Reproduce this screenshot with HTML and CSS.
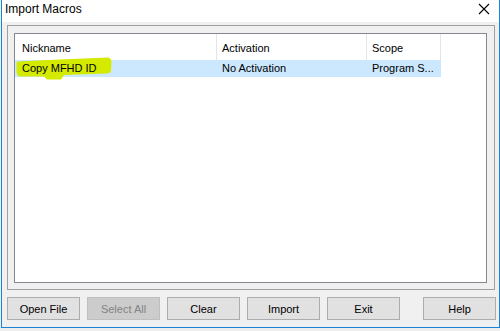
FILE: index.html
```html
<!DOCTYPE html>
<html lang="en">
<head>
  <meta charset="UTF-8"/>
  <title>Import Macros</title>
  <link rel="stylesheet" href="styles.css">
</head>
<body>

  <div class="window">
    <!-- TITLE BAR -->
    <div class="titlebar">
      <div class="title">Import Macros</div>
      <svg class="close" width="12" height="12" viewBox="0 0 12 12">
        <path d="M1 1 L11 11 M11 1 L1 11" stroke="#000" stroke-width="1.1" fill="none"/>
      </svg>
    </div>

    <!-- CLIENT AREA -->
    <div class="client">
      <div class="frame">
        <div class="listbox">
          <div class="list-head">
            <div class="col col-name">Nickname</div>
            <div class="col">Activation</div>
            <div class="col">Scope</div>
          </div>
          <div class="list-row selected">
            <svg class="marker" width="110" height="26" viewBox="14 55 110 26">
              <path d="M17 61.5 L60 59.5 L107 57.5 Q111.5 57.5 111.5 62 L111 71 Q110.5 73.5 106 73.5 L64 75 L61 79.5 L47 79.5 L44 76.5 L20 76.5 Q16.5 76 16.5 71 L16.5 65 Q16.5 62 17 61.5 Z" fill="#d4ea00"/>
            </svg>
            <div class="col col-name">Copy MFHD ID</div>
            <div class="col">No Activation</div>
            <div class="col">Program S...</div>
          </div>
        </div>
      </div>

      <div class="buttons">
        <button class="btn">Open File</button>
        <button class="btn" disabled>Select All</button>
        <button class="btn">Clear</button>
        <button class="btn">Import</button>
        <button class="btn">Exit</button>
        <button class="btn btn-help">Help</button>
      </div>
    </div>
  </div>

</body>
</html>
```

FILE: styles.css
```css
/* RESET */
* {
  margin: 0;
  padding: 0;
  box-sizing: border-box;
}

html, body {
  height: 100%;
  font-family: "Liberation Sans", Arial, sans-serif;
  font-size: 11px;
  color: #000;
  background: #eeeeee;
  overflow: hidden;
}

/* WINDOW */
.window {
  width: 499px;
  margin-left: 1px;
  border: 1px solid #1883d7;
  border-top: none;
  background: #f0f0f0;
}

.titlebar {
  height: 22px;
  background: #fff;
  display: flex;
  align-items: flex-start;
  justify-content: space-between;
  padding: 0 9px 0 3px;
}

.title {
  font-size: 12px;
  line-height: 18px;
  color: #000;
}

.close {
  margin-top: 3px;
}

/* CLIENT */
.client {
  padding: 3px 4px 7px 5px;
}

.frame {
  height: 265px;
  border: 1px solid #a0a0a0;
  padding: 7px 7px 6px 6px;
}

.listbox {
  height: 100%;
  border: 1px solid #828790;
  background: #fff;
}

/* LIST */
.list-head,
.list-row {
  display: grid;
  grid-template-columns: 202px 150px 74px;
  width: 426px;
}

.list-head {
  height: 26px;
}

.list-head .col {
  border-right: 1px solid #e5e5e5;
  padding-top: 3px;
  line-height: 23px;
}

.col {
  padding-left: 5px;
  white-space: nowrap;
  overflow: hidden;
  position: relative;
}

.col-name {
  padding-left: 7px;
}

.list-row {
  height: 17px;
  line-height: 17px;
  position: relative;
}

.list-row.selected {
  background: #cce8ff;
}

.marker {
  position: absolute;
  left: -1px;
  top: -5px;
}

/* BUTTONS */
.buttons {
  display: flex;
  gap: 7px;
  margin-top: 7px;
  width: 489px;
}

.btn {
  width: 73px;
  height: 23px;
  font-family: "Liberation Sans", Arial, sans-serif;
  font-size: 11px;
  color: #000;
  background: #e1e1e1;
  border: 1px solid #adadad;
}

.btn:disabled {
  background: #cccccc;
  border-color: #bfbfbf;
  color: #838383;
}

.btn-help {
  margin-left: auto;
}
```
